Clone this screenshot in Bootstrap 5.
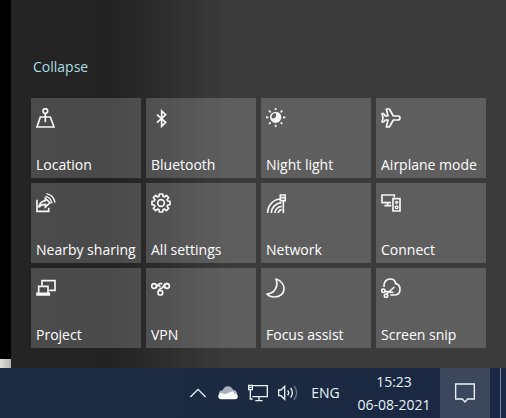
<!DOCTYPE html>
<html lang="en">
<head>
<meta charset="utf-8">
<meta name="viewport" content="width=device-width, initial-scale=1">
<title>Action center</title>
<link href="https://cdn.jsdelivr.net/npm/bootstrap@5.3.0/dist/css/bootstrap.min.css" rel="stylesheet">
<style>
body{font-family:"Open Sans","Noto Sans",sans-serif;font-size:14px;line-height:20px;background:#000;color:#fff}
.desk{width:11px;background:#000}
.desk-edge{height:9px;background:linear-gradient(90deg,#dededb,#b4b4b2)}
.action-panel{padding:57px 20px 20px;background:linear-gradient(90deg,#242424 0,#232323 100px,#2c2c2c 150px,#3b3b3b 215px,#3b3b3b 100%)}
.collapse-link{color:#a9dfe2;margin:0 2px 21px}
.tiles{grid-template-columns:repeat(4,minmax(0,1fr));gap:5px}
.tile{height:80px;padding:10px 0 3px 5px;background:rgba(255,255,255,.18);color:#fff}
.tile:hover{background:rgba(255,255,255,.28)}
.glyph{width:20px;height:20px;fill:none;stroke:#f8f8f8;stroke-width:5;flex:none;display:block}
.glyph .solid{fill:#f8f8f8;stroke:none}
.glyph .fine{stroke-width:4}
.taskbar{height:50px;padding-right:5px;background:linear-gradient(90deg,#1b2c42,#1b2941 60%,#1a2745)}
.taskbar .glyph{stroke-width:4;stroke:#e9f3f8}
.tray-btn{width:30px;height:50px;color:#e9f3f8}
.lang{width:45px}
.clock{width:92px;line-height:23px}
.notify{width:50px;background:#3c465c}
.show-desktop{width:11px;border-right:1px solid #7c8799}
</style>
<script src="https://cdn.jsdelivr.net/npm/bootstrap@5.3.0/dist/js/bootstrap.bundle.min.js"></script>
</head>
<body class="min-vh-100 d-flex flex-column">
<main class="d-flex flex-grow-1">
  <div class="desk d-flex flex-column justify-content-end flex-shrink-0"><div class="desk-edge"></div></div>
  <section class="action-panel flex-grow-1 d-flex flex-column align-items-stretch justify-content-end" aria-label="Quick actions">
    <button type="button" class="collapse-link border-0 bg-transparent p-0 align-self-start">Collapse</button>
    <div class="tiles d-grid">
      <button type="button" class="tile border-0 text-start text-nowrap d-flex flex-column justify-content-between">
        <svg class="glyph" viewBox="0 0 60 60" aria-hidden="true"><circle cx="28" cy="9" r="7"/><path d="M28 16V43M20 27H13L3 57H54L43 27H36M20 27H36"/></svg>
        <span>Location</span>
      </button>
      <button type="button" class="tile border-0 text-start text-nowrap d-flex flex-column justify-content-between">
        <svg class="glyph" viewBox="0 0 60 60" aria-hidden="true"><path d="M18 20L44 43L32 55V9L44 20L18 44"/></svg>
        <span>Bluetooth</span>
      </button>
      <button type="button" class="tile border-0 text-start text-nowrap d-flex flex-column justify-content-between">
        <svg class="glyph" viewBox="0 0 60 60" aria-hidden="true"><path class="solid" d="M29 11A17 17 0 1 1 12 28A17 17 0 0 1 29 11ZM28 15A12 12 0 0 0 17 30C25 35 35 25 28 15Z"/><path d="M29 0V6M29 50V57M0 28H7M51 28H58M9 8L14 13M49 8L44 13M9 48L14 43M49 48L44 43"/></svg>
        <span>Night light</span>
      </button>
      <button type="button" class="tile border-0 text-start text-nowrap d-flex flex-column justify-content-between">
        <svg class="glyph" viewBox="0 0 60 60" aria-hidden="true"><path stroke-linejoin="round" d="M3 17H8L13 24H21L16 3H25L37 24H51C55 24 57 26 57 30C57 34 55 36 51 36H37L25 57H16L21 36H13L8 42H3L6 30Z"/></svg>
        <span>Airplane mode</span>
      </button>
      <button type="button" class="tile border-0 text-start text-nowrap d-flex flex-column justify-content-between">
        <svg class="glyph" viewBox="0 0 60 60" aria-hidden="true"><path d="M3 20V55H38V44M8 43Q12 25 28 23V16L42 29L28 42V34Q16 33 8 43Z"/><path class="fine" d="M28 10Q44 12 48 31M31 2Q53 6 57 29"/></svg>
        <span>Nearby sharing</span>
      </button>
      <button type="button" class="tile border-0 text-start text-nowrap d-flex flex-column justify-content-between">
        <svg class="glyph" viewBox="0 0 60 60" aria-hidden="true"><path stroke-linejoin="round" d="M25 3H35L36 10L40 12L46 7L53 14L48 20L50 24L57 25V35L50 36L48 40L53 46L46 53L40 48L36 50L35 57H25L24 50L20 48L14 53L7 46L12 40L10 36L3 35V25L10 24L12 20L7 14L14 7L20 12L24 10Z"/><circle cx="30" cy="30" r="10"/></svg>
        <span>All settings</span>
      </button>
      <button type="button" class="tile border-0 text-start text-nowrap d-flex flex-column justify-content-between">
        <svg class="glyph" viewBox="0 0 60 60" aria-hidden="true"><path d="M5 60C5 38 20 20 42 18M16 60C16 44 28 31 46 29M27 60C27 50 35 41 47 40M37 60C37 55 41 51 47 50M52 25V60M43 6H58V23H43ZM46 14H55"/></svg>
        <span>Network</span>
      </button>
      <button type="button" class="tile border-0 text-start text-nowrap d-flex flex-column justify-content-between">
        <svg class="glyph" viewBox="0 0 60 60" aria-hidden="true"><path d="M40 13V6H3V29H30M20 29V37M10 38H31M36 17H57V54H36Z"/><circle class="fine" cx="47" cy="28" r="3"/><circle class="fine" cx="47" cy="43" r="4"/></svg>
        <span>Connect</span>
      </button>
      <button type="button" class="tile border-0 text-start text-nowrap d-flex flex-column justify-content-between">
        <svg class="glyph" viewBox="0 0 60 60" aria-hidden="true"><path d="M18 22V8H57V37H40M8 45V25H36V45M3 46H40V51H3Z"/></svg>
        <span>Project</span>
      </button>
      <button type="button" class="tile border-0 text-start text-nowrap d-flex flex-column justify-content-between">
        <svg class="glyph" viewBox="0 0 60 60" aria-hidden="true"><circle cx="9" cy="24" r="7"/><circle cx="48" cy="24" r="7"/><circle cx="28" cy="44" r="7"/><path d="M14 30C21 27 19 17 27 17H34M20 18L28 27M22 40C22 31 33 33 37 26Q40 17 48 17M40 26Q42 31 48 31"/></svg>
        <span>VPN</span>
      </button>
      <button type="button" class="tile border-0 text-start text-nowrap d-flex flex-column justify-content-between">
        <svg class="glyph" viewBox="0 0 60 60" aria-hidden="true"><path stroke-linejoin="round" d="M30 3C64 14 61 57 26 57C16 57 8 54 3 48C26 46 38 26 30 3Z"/></svg>
        <span>Focus assist</span>
      </button>
      <button type="button" class="tile border-0 text-start text-nowrap d-flex flex-column justify-content-between">
        <svg class="glyph" viewBox="0 0 60 60" aria-hidden="true"><path d="M9 27C7 12 16 3 28 3C38 3 43 9 44 17C53 19 57 26 57 34C57 46 50 51 42 51H28M12 40L37 43M17 48L40 27"/><circle cx="7" cy="38" r="5"/><circle cx="15" cy="53" r="5"/></svg>
        <span>Screen snip</span>
      </button>
    </div>
  </section>
</main>
<footer class="taskbar d-flex align-items-center justify-content-end flex-shrink-0">
  <button type="button" class="tray-btn border-0 bg-transparent p-0 d-flex align-items-center justify-content-center" aria-label="Show hidden icons">
    <svg class="glyph" viewBox="0 0 60 60" aria-hidden="true"><path d="M7 42L30 19L53 42"/></svg>
  </button>
  <button type="button" class="tray-btn border-0 bg-transparent p-0 d-flex align-items-center justify-content-center" aria-label="OneDrive">
    <svg class="glyph" viewBox="0 0 60 60" aria-hidden="true"><path fill="#a9b2ba" stroke="none" d="M6 40C-2 32 4 22 14 22C18 8 38 4 45 20C52 20 57 26 58 34L30 44Z"/><path fill="#fbfdfd" stroke="none" d="M10 49C-3 48-2 31 11 31C16 31 19 33 21 34L43 25C48 28 49 31 50 32C62 31 63 48 51 49Z"/></svg>
  </button>
  <button type="button" class="tray-btn border-0 bg-transparent p-0 d-flex align-items-center justify-content-center" aria-label="Network status">
    <svg class="glyph" viewBox="0 0 60 60" aria-hidden="true"><path d="M14 8H58V41H13M2 7H13V20H2ZM7 20V48H14M33 41V53M22 53H44M4 13H10"/></svg>
  </button>
  <button type="button" class="tray-btn border-0 bg-transparent p-0 d-flex align-items-center justify-content-center" aria-label="Volume">
    <svg class="glyph" viewBox="0 0 60 60" aria-hidden="true"><path d="M2 21H9L20 10V49L9 38H2ZM29 22Q35 29 29 37M38 15Q48 29 38 44"/><path stroke="#66758a" d="M48 8Q64 29 48 51"/></svg>
  </button>
  <button type="button" class="tray-btn lang border-0 bg-transparent p-0 text-center" aria-label="Input language: English">ENG</button>
  <button type="button" class="tray-btn clock border-0 bg-transparent p-0 text-center text-nowrap"><span class="d-block">15:23</span><span class="d-block">06-08-2021</span></button>
  <button type="button" class="tray-btn notify border-0 p-0 d-flex align-items-center justify-content-center" aria-label="Notifications">
    <svg class="glyph" viewBox="0 0 60 60" aria-hidden="true"><path d="M2 3H58V48H38L30 57L22 48H2Z"/></svg>
  </button>
  <button type="button" class="tray-btn show-desktop border-top-0 border-bottom-0 border-start-0 bg-transparent p-0" aria-label="Show desktop"></button>
</footer>
</body>
</html>
